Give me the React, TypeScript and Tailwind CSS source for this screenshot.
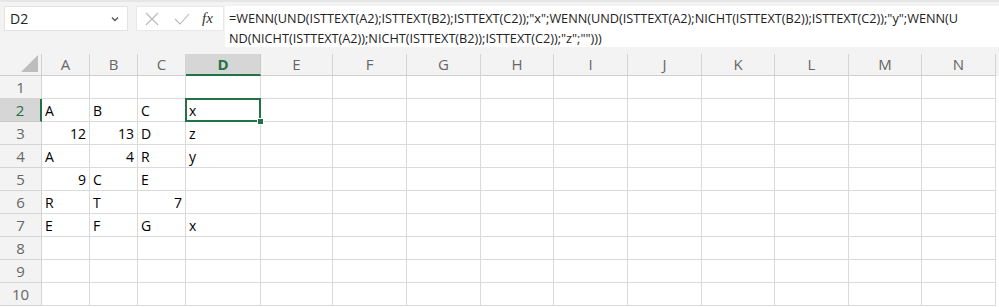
import React from 'react';

// column letters with their pixel widths as seen in the sheet
const columns: { name: string; width: string }[] = [
  { name: 'A', width: 'w-[48px]' },
  { name: 'B', width: 'w-[48px]' },
  { name: 'C', width: 'w-[48px]' },
  { name: 'D', width: 'w-[75px]' },
  { name: 'E', width: 'w-[72px]' },
  { name: 'F', width: 'w-[74px]' },
  { name: 'G', width: 'w-[74px]' },
  { name: 'H', width: 'w-[73px]' },
  { name: 'I', width: 'w-[74px]' },
  { name: 'J', width: 'w-[74px]' },
  { name: 'K', width: 'w-[73px]' },
  { name: 'L', width: 'w-[74px]' },
  { name: 'M', width: 'w-[73px]' },
  { name: 'N', width: 'w-[74px]' },
];

type Cell = string | number | null;

const data: Cell[][] = [
  [null, null, null, null],
  ['A', 'B', 'C', 'x'],
  [12, 13, 'D', 'z'],
  ['A', 4, 'R', 'y'],
  [9, 'C', 'E', null],
  ['R', 'T', 7, null],
  ['E', 'F', 'G', 'x'],
  [null, null, null, null],
  [null, null, null, null],
  [null, null, null, null],
];

const line1 =
  '=WENN(UND(ISTTEXT(A2);ISTTEXT(B2);ISTTEXT(C2));"x";WENN(UND(ISTTEXT(A2);NICHT(ISTTEXT(B2));ISTTEXT(C2));"y";WENN(U';
const line2 = 'ND(NICHT(ISTTEXT(A2));NICHT(ISTTEXT(B2));ISTTEXT(C2));"z";"")))';

const FormulaBar = () => (
  <div className="h-[54px] bg-[#f3f3f3] border-t-2 border-[#e6e6e6] flex items-start pt-[4px] pl-[4px]">
    <div className="w-[124px] h-[25px] bg-white border border-[#e3e3e3] flex items-center justify-between pl-[5px] pr-[8px]">
      <span className="text-[14px] text-[#222]">D2</span>
      <svg width="8" height="6" viewBox="0 0 8 6">
        <path d="M1 1.5 L4 4.5 L7 1.5" fill="none" stroke="#555" strokeWidth="1.4" />
      </svg>
    </div>
    <div className="ml-[8px] w-[88px] h-[25px] bg-white border border-[#e8e8e8] flex items-center">
      <svg width="14" height="14" viewBox="0 0 14 14" className="ml-[8px]">
        <path d="M1 1 L13 13 M13 1 L1 13" stroke="#b8b8b8" strokeWidth="1.1" fill="none" />
      </svg>
      <svg width="16" height="12" viewBox="0 0 16 12" className="ml-[15px]">
        <path d="M1 6 L6 11 L15 1" stroke="#b8b8b8" strokeWidth="1.1" fill="none" />
      </svg>
      <span className="ml-[12px] italic text-[15px] text-[#333] font-['Liberation_Serif',serif]">fx</span>
    </div>
    <div className="ml-[1px] flex-1 h-[41px] bg-white pl-[4px] pt-[2px] text-[12.7px] leading-[20px] text-[#222] whitespace-nowrap overflow-hidden">
      <div>{line1}</div>
      <div>{line2}</div>
    </div>
  </div>
);

const Sheet = () => (
  <div className="flex flex-col">
    {/* header row */}
    <div className="flex h-[22px] bg-[#f3f3f3]">
      <div className="w-[42px] h-full border-r border-b border-[#d0d0d0] flex items-end justify-end pr-[3px] pb-[3px]">
        <svg width="17" height="17" viewBox="0 0 17 17">
          <path d="M17 0 L17 17 L0 17 Z" fill="#bdbdbd" />
        </svg>
      </div>
      {columns.map((c) =>
        c.name === 'D' ? (
          <div
            key={c.name}
            className={`${c.width} h-full bg-[#d6d6d6] border-r border-[#c8c8c8] border-b-2 border-b-[#217346] flex items-center justify-center text-[15px] font-bold text-[#217346]`}
          >
            {c.name}
          </div>
        ) : (
          <div
            key={c.name}
            className={`${c.width} h-full border-r border-b border-[#d4d4d4] border-b-[#cfcfcf] flex items-center justify-center text-[15px] text-[#666]`}
          >
            {c.name}
          </div>
        )
      )}
    </div>
    {data.map((row, ri) => (
      <div key={ri} className="flex h-[23px]">
        {ri === 1 ? (
          <div className="w-[42px] h-full bg-[#d6d6d6] border-b border-[#c8c8c8] border-r-2 border-r-[#217346] flex items-center justify-center text-[15px] text-[#217346]">
            {ri + 1}
          </div>
        ) : (
          <div className="w-[42px] h-full bg-[#f3f3f3] border-r border-b border-[#d4d4d4] flex items-center justify-center text-[15px] text-[#666]">
            {ri + 1}
          </div>
        )}
        {columns.map((c, ci) => {
          const v = ci < 4 ? row[ci] : null;
          const isNum = typeof v === 'number';
          const selected = ri === 1 && c.name === 'D';
          return (
            <div
              key={c.name}
              className={`${c.width} h-full border-r border-b border-[#dadada] relative flex items-center px-[3px] text-[14px] text-black font-['Open_Sans',sans-serif] ${
                isNum ? 'justify-end' : 'justify-start'
              }`}
            >
              {v}
              {selected && (
                <>
                  <div className="absolute left-[-1px] top-[-1px] right-[-1px] bottom-[-1px] border-2 border-[#217346]" />
                  <div className="absolute z-10 right-[-4px] bottom-[-4px] w-[7px] h-[7px] bg-[#217346] border border-white" />
                </>
              )}
            </div>
          );
        })}
      </div>
    ))}
  </div>
);

export default function App() {
  return (
    <div className="w-[999px] h-[307px] overflow-hidden bg-white font-['Open_Sans',sans-serif]">
      <FormulaBar />
      <Sheet />
    </div>
  );
}
